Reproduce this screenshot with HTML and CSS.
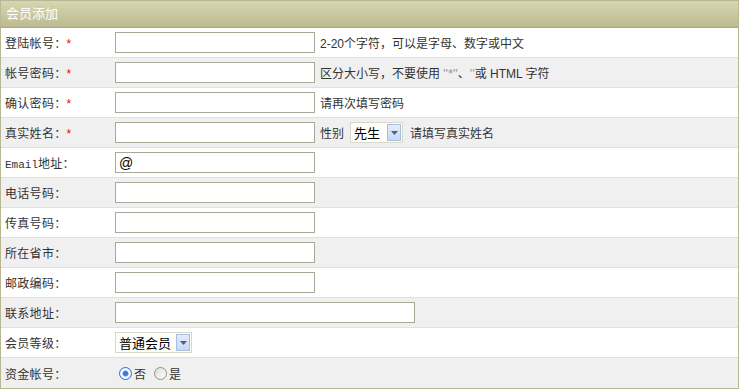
FILE: index.html
```html
<!DOCTYPE html>
<html lang="zh-CN">
<head>
    <meta charset="UTF-8">
    <title>会员添加</title>
    <link rel="stylesheet" href="styles.css">
</head>
<body>

    <!-- Member form panel -->
    <div class="panel">
        <div class="panel-title">会员添加</div>

        <div class="row">
            <div class="label">登陆帐号：<span class="req">*</span></div>
            <div class="field">
                <input type="text" class="txt">
                <span class="tip">2-20个字符，可以是字母、数字或中文</span>
            </div>
        </div>

        <div class="row alt">
            <div class="label">帐号密码：<span class="req">*</span></div>
            <div class="field">
                <input type="password" class="txt">
                <span class="tip">区分大小写，不要使用 <span class="q">"*"</span>、<span class="q">''</span>或 HTML 字符</span>
            </div>
        </div>

        <div class="row">
            <div class="label">确认密码：<span class="req">*</span></div>
            <div class="field">
                <input type="password" class="txt">
                <span class="tip">请再次填写密码</span>
            </div>
        </div>

        <div class="row alt">
            <div class="label">真实姓名：<span class="req">*</span></div>
            <div class="field">
                <input type="text" class="txt">
                <span class="tip">性别</span>
                <div class="select sex">
                    <span class="select-text">先生</span>
                    <span class="select-arrow"><svg width="7" height="4" viewBox="0 0 7 4"><path d="M0 0h7L3.5 4z" fill="#4d6185"/></svg></span>
                </div>
                <span class="tip after">请填写真实姓名</span>
            </div>
        </div>

        <div class="row">
            <div class="label"><span class="mono">Email</span>地址：</div>
            <div class="field">
                <input type="text" class="txt" value="@">
            </div>
        </div>

        <div class="row alt">
            <div class="label">电话号码：</div>
            <div class="field"><input type="text" class="txt"></div>
        </div>

        <div class="row">
            <div class="label">传真号码：</div>
            <div class="field"><input type="text" class="txt"></div>
        </div>

        <div class="row alt">
            <div class="label">所在省市：</div>
            <div class="field"><input type="text" class="txt"></div>
        </div>

        <div class="row">
            <div class="label">邮政编码：</div>
            <div class="field"><input type="text" class="txt"></div>
        </div>

        <div class="row alt">
            <div class="label">联系地址：</div>
            <div class="field"><input type="text" class="txt wide"></div>
        </div>

        <div class="row">
            <div class="label">会员等级：</div>
            <div class="field">
                <div class="select level">
                    <span class="select-text">普通会员</span>
                    <span class="select-arrow"><svg width="7" height="4" viewBox="0 0 7 4"><path d="M0 0h7L3.5 4z" fill="#4d6185"/></svg></span>
                </div>
            </div>
        </div>

        <div class="row alt last">
            <div class="label">资金帐号：</div>
            <div class="field">
                <span class="radio checked"></span><span class="radio-label">否</span>
                <span class="radio"></span><span class="radio-label">是</span>
            </div>
        </div>
    </div>

</body>
</html>
```

FILE: styles.css
```css
/* Reset */
body, html {
    margin: 0;
    padding: 0;
    font-family: "Liberation Sans", "Noto Sans CJK SC", sans-serif;
    font-size: 12px;
    color: #333;
    background: #fff;
}

/* Panel */
.panel {
    width: 737px;
    border: 1px solid #b8b794;
}

.panel-title {
    height: 26px;
    line-height: 26px;
    padding-left: 5px;
    color: #fff;
    font-size: 13px;
    background: linear-gradient(to bottom, #d7d6af, #bcba91);
    border-bottom: 1px solid #a9a783;
}

/* Form rows */
.row {
    display: flex;
    align-items: center;
    height: 29px;
    border-bottom: 1px solid #e0e0e0;
    background: #fff;
}

.row.alt {
    background: #f0f0f0;
}

.row.last {
    height: 30px;
    border-bottom: none;
}

.label {
    width: 110px;
    padding-left: 4px;
    flex-shrink: 0;
    letter-spacing: 0.3px;
}

.mono {
    font-family: "Liberation Mono", monospace;
    font-size: 11px;
    letter-spacing: 0;
}

.req {
    color: #f00;
    font-size: 12px;
}

.field {
    display: flex;
    align-items: center;
}

/* Inputs */
.txt {
    box-sizing: border-box;
    width: 200px;
    height: 21px;
    margin: 0;
    padding: 1px 3px;
    border: 1px solid #a9a999;
    background: #fff;
    font-family: "Liberation Sans", sans-serif;
    font-size: 14px;
    color: #000;
}

.txt.wide {
    width: 300px;
}

.tip {
    margin-left: 5px;
}

.tip.after {
    margin-left: 7px;
}

.q {
    color: #999;
    font-size: 13px;
}

/* Fake select */
.select {
    box-sizing: border-box;
    display: flex;
    align-items: center;
    height: 21px;
    margin-left: 6px;
    padding-left: 3px;
    border: 1px solid #d8d8c8;
    background: #fffffa;
    font-size: 13px;
    color: #000;
}

.select.sex {
    width: 53px;
}

.select.level {
    width: 77px;
    margin-left: 0;
}

.select-text {
    flex: 1;
}

.select-arrow {
    box-sizing: border-box;
    display: flex;
    align-items: center;
    justify-content: center;
    width: 14px;
    height: 17px;
    margin-right: 1px;
    border: 1px solid #a7bde2;
    background: linear-gradient(to bottom, #e4ecfb, #c8d8f5);
}

/* Radios */
.radio {
    box-sizing: border-box;
    display: inline-block;
    width: 13px;
    height: 13px;
    margin-left: 4px;
    border: 1px solid #8f8f8f;
    border-radius: 50%;
    background: linear-gradient(to bottom right, #dcdcd6, #fff);
}

.radio.checked {
    border-color: #3b6ab7;
    background: radial-gradient(circle, #2b6bd9 0, #4d87e6 2.5px, #fff 3.5px, #e8eaf0 6px);
}

.radio-label {
    margin-left: 2px;
    margin-right: 4px;
}
```
